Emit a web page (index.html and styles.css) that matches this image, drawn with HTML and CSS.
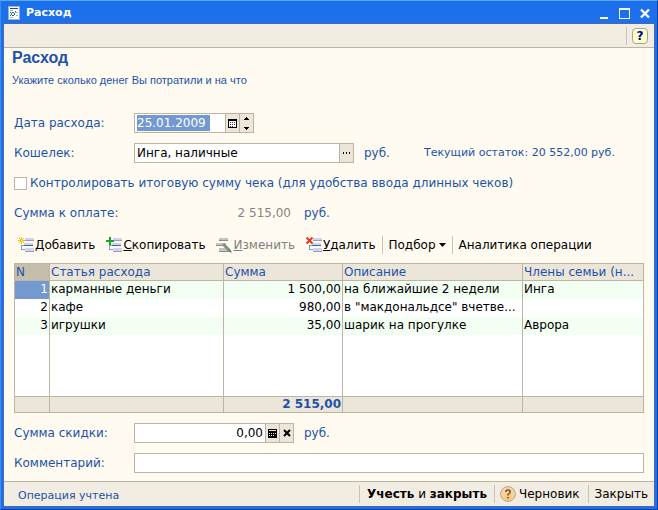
FILE: index.html
```html
<!DOCTYPE html>
<html lang="ru">
<head>
<meta charset="utf-8">
<title>Расход</title>
<link rel="stylesheet" href="styles.css">
</head>
<body>
<div class="window">
  <header class="titlebar">
    <svg class="app-icon" width="12" height="14" viewBox="0 0 12 14" shape-rendering="crispEdges">
      <path fill="#9cb0bd" d="M0 0h12v14H0z"/><path fill="#fffef4" d="M1 1h10v12H1z"/>
      <path fill="#1b4c8c" d="M2 2h8v1H2z"/><path fill="#8cc0d8" d="M2 4h3v1H2zM7 6h3v1H7zM8 9h2v1H8zM2 11h3v1H2z"/>
      <path fill="#286690" d="M4 6h2v1H4zM3 7h1v2H3zM6 7h1v2H6zM4 9h2v1H4zM2 6h1v1H2zM7 5h1v1H7zM2 9h1v1H2z"/>
    </svg>
    <span class="title">Расход</span>
    <button class="win-btn" aria-label="Свернуть"><svg width="11" height="11" shape-rendering="crispEdges"><path fill="#fff" d="M2 9h8v2H2z"/></svg></button>
    <button class="win-btn" aria-label="Развернуть"><svg width="11" height="11" shape-rendering="crispEdges"><path fill="#fff" fill-rule="evenodd" d="M0 0h11v11H0zM1 2v8h9V2z"/></svg></button>
    <button class="win-btn" aria-label="Закрыть окно"><svg width="11" height="11"><path stroke="#fff" stroke-width="2.400" d="M1 1.500l8 8M9 1.500l-8 8"/></svg></button>
  </header>
  <div class="client">
    <div class="helpbar">
      <span class="sep"></span>
      <button class="help" aria-label="Справка">?</button>
    </div>
    <main>
      <h1>Расход</h1>
      <p class="hint">Укажите сколько денег Вы потратили и на что</p>
      <div class="form">
        <div class="row">
          <label class="caption" for="date">Дата расхода:</label>
          <div class="field date">
            <div class="value"><input class="selected" id="date" value="25.01.2009"></div>
            <button aria-label="Календарь"><svg width="9" height="9" shape-rendering="crispEdges"><path fill="#fff" d="M0 0h9v9H0z"/><path fill-rule="evenodd" d="M0 0h9v9H0zM1 2v6h7V2z"/><path fill="#444" d="M2 3h1v1H2zM4 3h1v1H4zM6 3h1v1H6zM2 5h1v1H2zM4 5h1v1H4zM6 5h1v1H6zM2 7h1v1H2zM4 7h1v1H4z"/></svg></button>
            <button aria-label="Изменить дату"><svg width="5" height="13" shape-rendering="crispEdges"><path d="M2 0h1v1h1v1h1v1H0V2h1V1h1zM0 10h5v1H4v1H3v1H2v-1H1v-1H0z"/></svg></button>
          </div>
        </div>
        <div class="row">
          <label class="caption" for="wallet">Кошелек:</label>
          <div class="field wallet">
            <div class="value"><input id="wallet" value="Инга, наличные"></div>
            <button aria-label="Выбрать"><svg width="8" height="2" shape-rendering="crispEdges"><path d="M0 0h1v2H0zM3 0h1v2H3zM6 0h1v2H6z"/></svg></button>
          </div>
          <span class="unit">руб.</span>
          <span class="balance">Текущий остаток: 20 552,00 руб.</span>
        </div>
        <div class="row">
          <input type="checkbox" id="control"><label for="control">Контролировать итоговую сумму чека (для удобства ввода длинных чеков)</label>
        </div>
        <div class="row">
          <span class="caption">Сумма к оплате:</span>
          <output class="total">2 515,00</output>
          <span class="unit">руб.</span>
        </div>
      </div>
      <div class="toolbar">
        <button>
          <svg width="16" height="16" shape-rendering="crispEdges"><use href="#list"/><path fill="#f5c400" d="M3 0h1v2H3zM3 5h1v2H3zM0 3h2v1H0zM5 3h2v1H5zM1 1h1v1H1zM5 1h1v1H5zM1 5h1v1H1zM5 5h1v1H5zM2 2h3v3H2z"/><path fill="#fffbb0" d="M3 3h1v1H3z"/></svg><span><u>Д</u>обавить</span></button>
        <button>
          <svg width="16" height="16" shape-rendering="crispEdges"><use href="#list"/><path fill="#18a52c" d="M3 0h2v3h3v2H5v3H3V5H0V3h3z"/></svg><span><u>С</u>копировать</span></button>
        <button disabled>
          <svg width="16" height="16"><path fill="#c4c4c4" d="M3 1h9v3H3zM0 6h10v2H0zM3 11h10v3H3z"/><path fill="#8c8c8c" d="M3 3h9v1H3zM0 8h10v1H0zM3 14h10v1H3z"/><path fill="none" stroke="#7d8f7d" stroke-width="3" d="M7 7l6 6"/><path fill="#666" d="M12 14l2-2 2 4z"/></svg><span><u>И</u>зменить</span></button>
        <button>
          <svg width="16" height="16"><use href="#list"/><path fill="none" stroke="#e83818" stroke-width="2" d="M.500 .500l6 6M6.500 .500l-6 6"/></svg><span><u>У</u>далить</span></button>
        <span class="sep"></span>
        <button>Подбор<svg class="drop" width="7" height="4"><path d="M0 0h7L3.500 4z"/></svg></button>
        <span class="sep"></span>
        <button>Аналитика операции</button>
      </div>
      <table>
        <colgroup><col class="c-num"><col class="c-item"><col class="c-sum"><col class="c-desc"><col></colgroup>
        <thead><tr><th class="current">N</th><th>Статья расхода</th><th>Сумма</th><th>Описание</th><th>Члены семьи (н...</th></tr></thead>
        <tbody>
          <tr><td class="num active">1</td><td>карманные деньги</td><td class="num">1 500,00</td><td>на ближайшие 2 недели</td><td>Инга</td></tr>
          <tr><td class="num">2</td><td>кафе</td><td class="num">980,00</td><td>в "макдональдсе" вчетве...</td><td></td></tr>
          <tr><td class="num">3</td><td>игрушки</td><td class="num">35,00</td><td>шарик на прогулке</td><td>Аврора</td></tr>
          <tr class="blank"><td></td><td></td><td></td><td></td><td></td></tr>
        </tbody>
        <tfoot><tr><td></td><td></td><td class="num">2 515,00</td><td></td><td></td></tr></tfoot>
      </table>
      <div class="form">
        <div class="row">
          <label class="caption" for="discount">Сумма скидки:</label>
          <div class="field discount">
            <div class="value"><input class="right" id="discount" value="0,00"></div>
            <button aria-label="Калькулятор"><svg width="9" height="9" shape-rendering="crispEdges"><path d="M0 0h9v9H0z"/><path fill="#ece5da" d="M1 1h7v1H1zM1 4h1v1H1zM3 4h1v1H3zM5 4h1v1H5zM7 4h1v1H7zM1 6h1v1H1zM3 6h1v1H3zM5 6h1v1H5z"/></svg></button>
            <button aria-label="Очистить"><svg width="8" height="8"><path stroke="#000" stroke-width="2" d="M1 1l6 6M7 1L1 7"/></svg></button>
          </div>
          <span class="unit">руб.</span>
        </div>
        <div class="row">
          <label class="caption" for="comment">Комментарий:</label>
          <div class="field comment"><div class="value"><input id="comment"></div></div>
        </div>
      </div>
    </main>
    <footer>
      <span class="status">Операция учтена</span>
      <span class="sep"></span>
      <button class="primary"><b>Учесть</b> и <b>закрыть</b></button>
      <span class="sep"></span>
      <button class="draft"><svg width="16" height="16"><defs><radialGradient id="orb" cx=".5" cy=".75"><stop offset="0" stop-color="#ffc56a"/><stop offset="1" stop-color="#f3d6ac"/></radialGradient></defs><circle cx="8" cy="8" r="7.400" fill="url(#orb)" stroke="#b9a08a"/><path fill="none" stroke="#7b4a2a" stroke-width="1.500" d="M5.800 6q0-2 2.200-2t2.200 2q0 1-2.200 2.500v1M8 11v1.500"/></svg>Черновик</button>
      <span class="sep"></span>
      <button class="close">Закрыть</button>
    </footer>
  </div>
</div>
<svg class="symbols" width="0" height="0" aria-hidden="true">
  <symbol id="list" viewBox="0 0 16 16"><path fill="#d2d2ee" d="M7 1h9v3H7zM6 6h9v2H6zM7 11h9v3H7z"/><path fill="#9a9ac8" d="M7 3h9v1H7zM7 14h9v1H7z"/><path fill="#2f6ca4" d="M6 8h9v1H6z"/><path fill="#7aa2c8" d="M3 8h3v1H3zM3 9h1v4H3zM4 12h3v1H4z"/></symbol>
</svg>
</body>
</html>
```
FILE: styles.css
```css
* { box-sizing: border-box; }
body {
  margin: 0;
  font: 12px/18px "DejaVu Sans", sans-serif;
  color: #000;
}
button, input { font: inherit; color: inherit; margin: 0; padding: 0; border: 0; background: none; }
svg { flex: none; }
.symbols { display: none; }
.window {
  display: flex;
  flex-direction: column;
  min-height: 100vh;
  background: #1c70ec;
  border: 1px solid #0a3fa8;
  border-top-color: #55acff;
  border-left-color: #3d8dfb;
  padding: 0 2px 2px;
}
.titlebar { display: flex; align-items: center; height: 22px; padding: 2px 4px 0 5px; color: #fff; }
.title { flex: 1; margin-left: 6px; font: bold 11px/18px "DejaVu Sans", sans-serif; }
.win-btn { display: flex; margin-left: 10px; }
.client { flex: 1; display: flex; flex-direction: column; background: #fffbf0; border: 1px solid #4a68b0; }
.helpbar {
  display: flex; justify-content: flex-end; align-items: center; gap: 5px;
  height: 24px; padding-right: 6px;
  background: #f2ede3; border-bottom: 1px solid #bdb4a4;
}
.sep { width: 1px; height: 18px; background: #c9c3b7; }
.help {
  width: 16px; height: 16px; border: 1px solid #a5a5a5; border-radius: 4px;
  background: #ffffc8; color: #000090; font: bold 12px/14px "DejaVu Sans", sans-serif;
}
main { flex: 1; padding: 0 10px; color: #1c53a9; }
h1 { margin: 0 -2px; font: bold 16px/20px "Liberation Sans", sans-serif; }
.hint { margin: 3px -2px 24px; font: 11px/18px "Liberation Sans", sans-serif; }
.form { display: flex; flex-direction: column; gap: 10px; }
.row { display: flex; align-items: center; height: 20px; }
.caption { width: 120px; }
.field { display: flex; height: 20px; border: 1px solid #bdb5a1; background: #fff; color: #000; }
.field .value { flex: 1; min-width: 0; display: flex; align-items: center; padding: 0 2px; }
.field input { width: 100%; height: 16px; outline: 0; }
.field .right { text-align: right; }
.field .selected { width: 73px; background: #7399d0; color: #fff; }
.field button {
  display: flex; align-items: center; justify-content: center; width: 14px;
  background: #ece5da; border-left: 1px solid #bdb5a1;
}
.date { width: 120px; }
.wallet { width: 220px; }
.discount { width: 160px; }
.comment { flex: 1; }
.unit { margin-left: 10px; }
.balance { margin-left: 34px; font-size: 11px; }
input[type="checkbox"] { appearance: none; width: 13px; height: 13px; margin-right: 3px; border: 1px solid #bdb5a1; background: #fff; }
.total { width: 160px; padding-right: 3px; text-align: right; color: #858585; }
.toolbar { display: flex; align-items: center; height: 24px; margin-top: 10px; gap: 11px; padding-left: 4px; color: #000; white-space: nowrap; }
.toolbar button { display: flex; align-items: center; gap: 1px; }
.toolbar button:disabled { color: #808080; }
.toolbar .sep { margin: 0 -5px; }
.drop { margin-left: 2px; }
table { width: 100%; margin: 6px 0 10px; border-collapse: collapse; table-layout: fixed; background: #fff; color: #000; }
.c-num { width: 35px; }
.c-item { width: 174px; }
.c-sum { width: 119px; }
.c-desc { width: 180px; }
th, td {
  height: 18px; padding: 0 1px; line-height: 15px;
  border: solid #bdb5a1; border-width: 0 1px; text-align: left; font-weight: normal;
  white-space: nowrap;
}
th { height: 17px; border-width: 1px; background: #ece5da; color: #1c53a9; }
th.current { background: #c6bead; }
tbody tr:nth-child(odd) { background: #f2fff2; }
tbody .blank:nth-child(n) { background: #fff; }
.blank td { height: 62px; }
.num { text-align: right; }
td.active { background: #7399d0; color: #fff; }
tfoot td { height: 16px; border-width: 1px; background: #ece5da; color: #1c53a9; font-weight: bold; }
footer {
  display: flex; align-items: center; height: 25px; margin-top: 8px; padding-right: 6px;
  background: #f2ede3; border-top: 1px solid #bdb4a4;
}
.status { flex: 1; padding: 4px 0 0 14px; font-size: 11px; color: #1c53a9; }
.primary { margin: 0 7px; }
.draft { display: flex; align-items: center; gap: 3px; margin: 0 8px 0 5px; }
.close { margin-left: 6px; }
```
